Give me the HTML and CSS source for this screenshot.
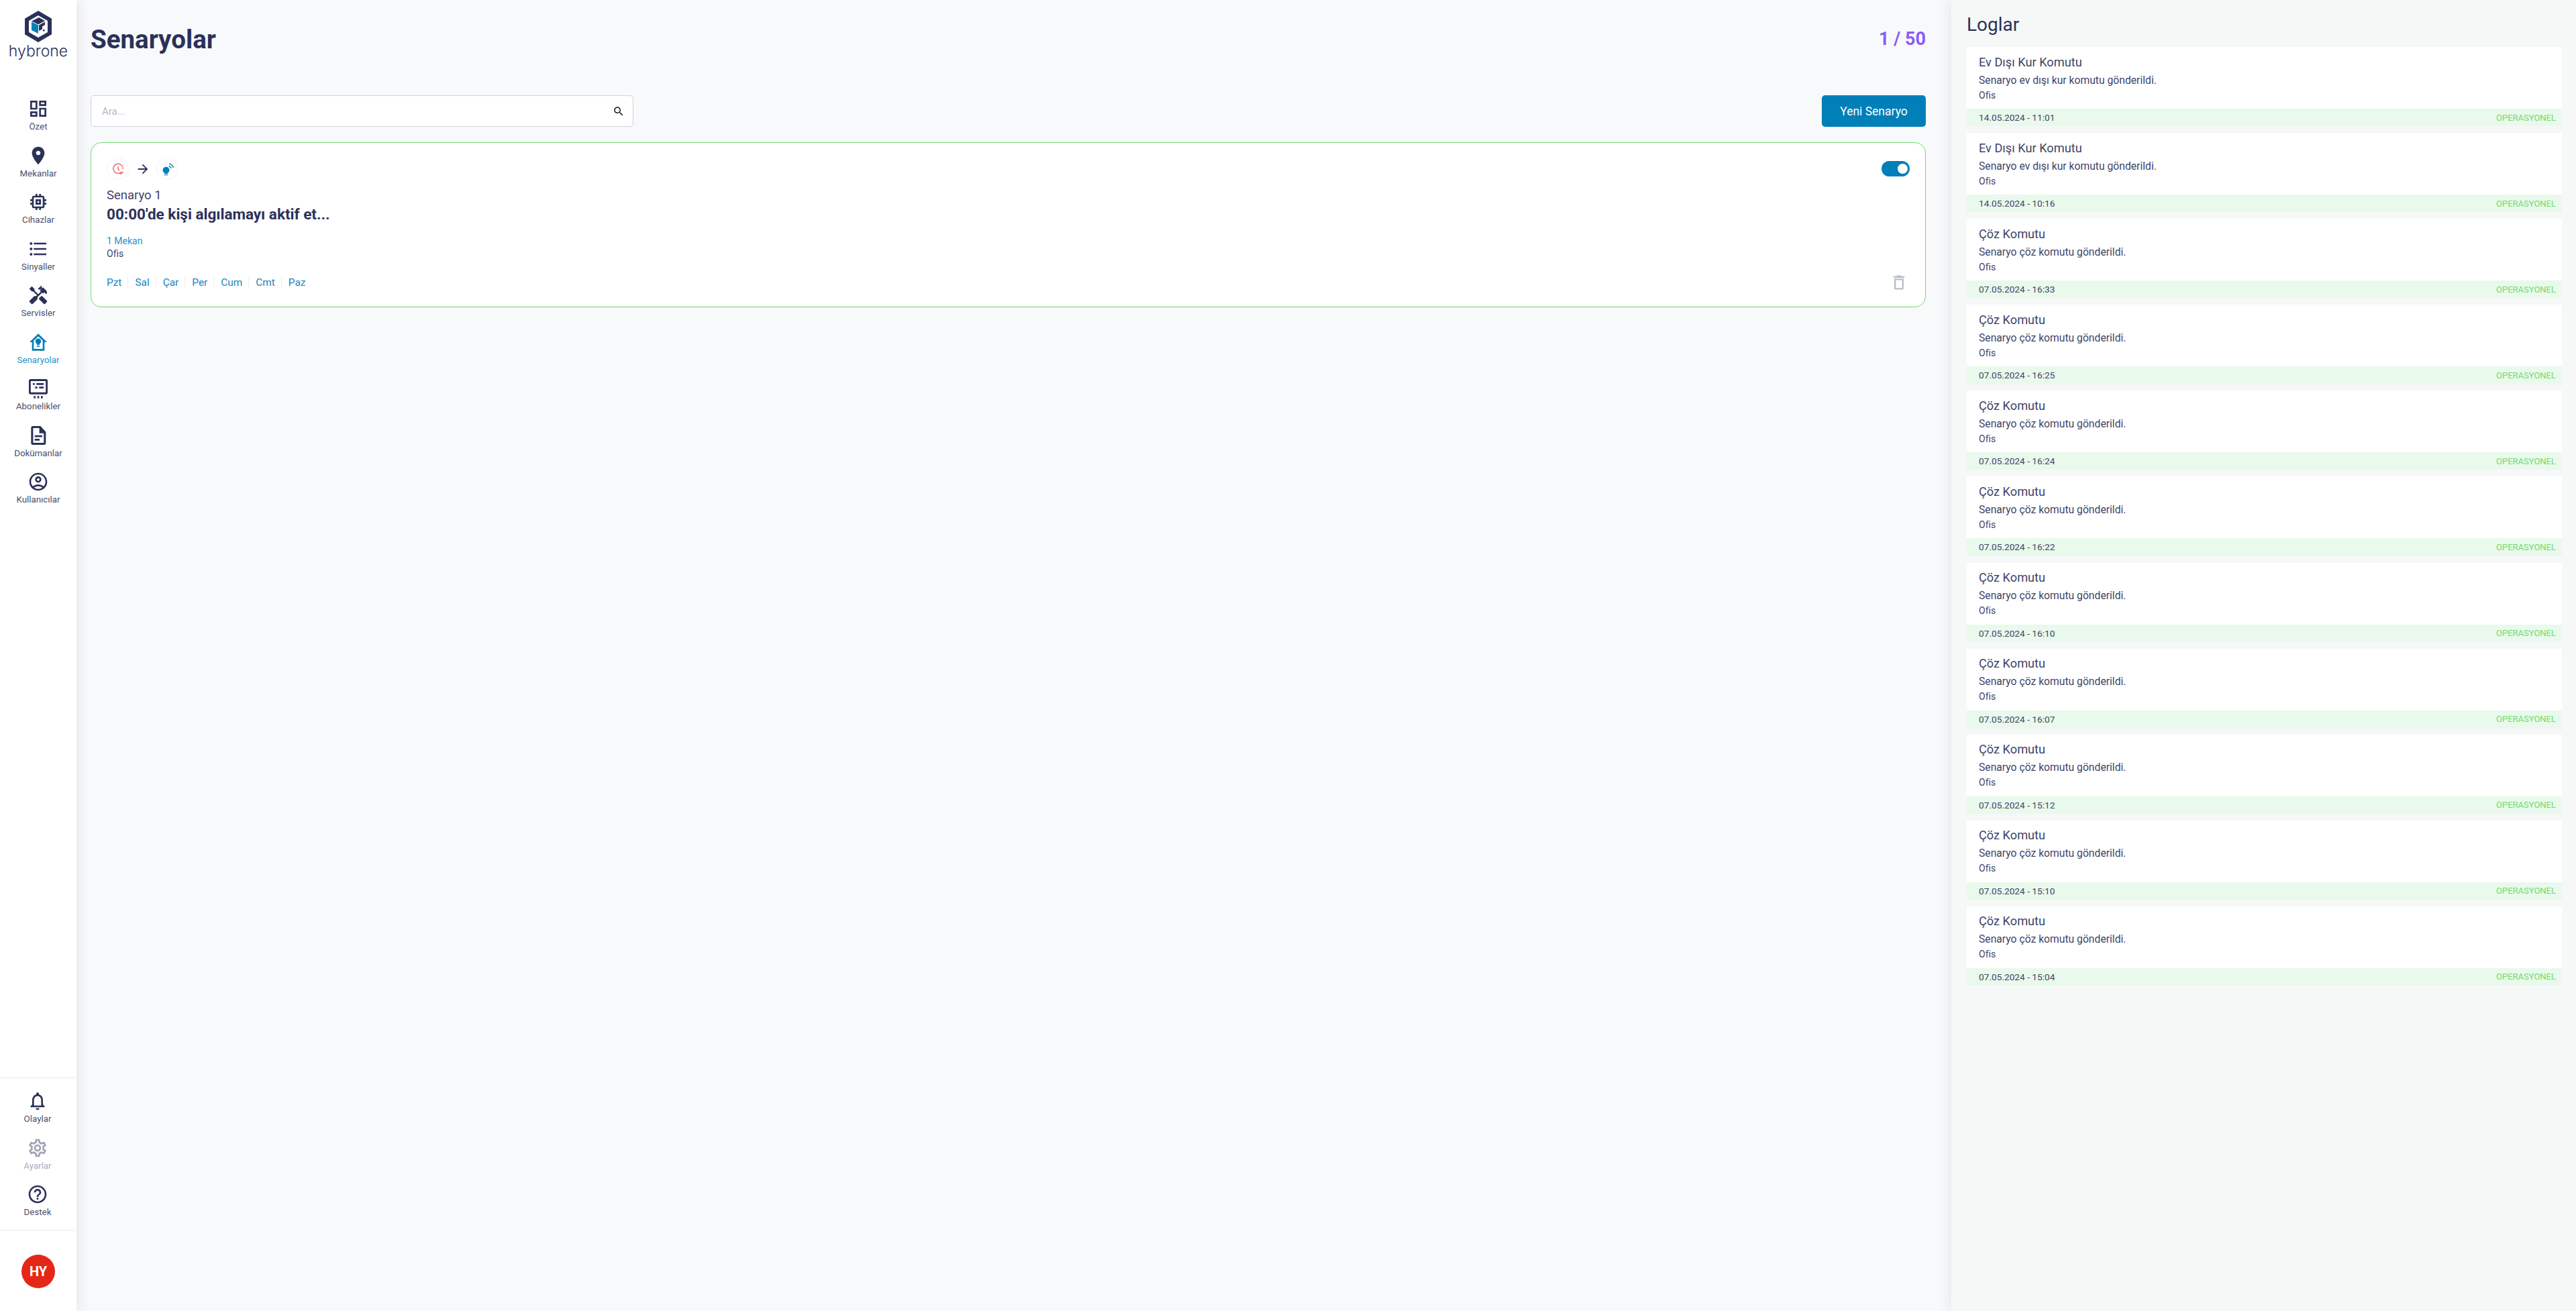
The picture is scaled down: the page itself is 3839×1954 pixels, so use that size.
FILE: index.html
```html
<!DOCTYPE html>
<html lang="tr">
<head>
    <meta charset="UTF-8">
    <title>Senaryolar</title>
    <link rel="stylesheet" href="styles.css">
</head>
<body>
<div class="layout">
    <nav class="sidebar">
        <div class="logo">
            <svg class="logo-mark" viewBox="0 0 40 47">
                <path fill="#2b3159" d="M20 0 40 11.7v23.6L20 47 0 35.300V11.700z"/>
                <path fill="#fff" d="M20 7 34 15.100v16.800L20 40 6 31.900V15.100z"/>
                <path fill="#007fb8" d="M10 16.500 20 21.500V34L10 29z"/>
                <path fill="#2b3159" d="M10 15.500 21 10 30 15 20 20.500z"/>
                <path fill="#2b3159" d="M21 21.500 30 16.500V21l-4 2.500v4L21 30z"/>
                <path fill="#2b3159" d="M27 28h2.500v2.500H27z"/>
            </svg>
            <span class="logo-text">hybrone</span>
        </div>

        <div class="nav-group">
            <a class="nav-item">
                <svg viewBox="0 0 24 24"><path d="M19 5v2h-4V5h4M9 5v6H5V5h4m10 8v6h-4v-6h4M9 17v2H5v-2h4M21 3h-8v6h8V3zM11 3H3v10h8V3zm10 8h-8v10h8V11zm-10 4H3v6h8v-6z"/></svg>
                <span>Özet</span>
            </a>
            <a class="nav-item">
                <svg viewBox="0 0 24 24"><path d="M12 2C8.130 2 5 5.130 5 9c0 5.250 7 13 7 13s7-7.750 7-13c0-3.870-3.130-7-7-7zm0 9.500c-1.380 0-2.500-1.120-2.500-2.500s1.120-2.500 2.500-2.500 2.500 1.120 2.500 2.500-1.120 2.500-2.500 2.500z"/></svg>
                <span>Mekanlar</span>
            </a>
            <a class="nav-item">
                <svg viewBox="0 0 24 24"><path d="M15 9H9v6h6V9zm-2 4h-2v-2h2v2zm8-2V9h-2V7c0-1.100-.9-2-2-2h-2V3h-2v2h-2V3H9v2H7c-1.100 0-2 .9-2 2v2H3v2h2v2H3v2h2v2c0 1.100.9 2 2 2h2v2h2v-2h2v2h2v-2h2c1.100 0 2-.9 2-2v-2h2v-2h-2v-2h2zm-4 6H7V7h10v10z"/></svg>
                <span>Cihazlar</span>
            </a>
            <a class="nav-item">
                <svg viewBox="0 0 24 24"><path d="M4 10.500c-.83 0-1.500.67-1.500 1.500s.67 1.500 1.500 1.500 1.500-.67 1.500-1.500-.67-1.500-1.500-1.500zm0-6c-.83 0-1.500.67-1.500 1.500S3.170 7.500 4 7.500 5.500 6.830 5.500 6 4.830 4.500 4 4.500zm0 12c-.83 0-1.500.68-1.500 1.500s.68 1.500 1.500 1.500 1.500-.68 1.500-1.500-.67-1.500-1.500-1.500zM7 19h14v-2H7v2zm0-6h14v-2H7v2zm0-8v2h14V5H7z"/></svg>
                <span>Sinyaller</span>
            </a>
            <a class="nav-item">
                <svg viewBox="0 0 24 24"><path d="M21.670 18.170l-5.300-5.300h-.99l-2.540 2.540v.99l5.300 5.300c.39.39 1.020.39 1.410 0l2.120-2.120c.39-.38.39-1.020 0-1.410z"/><path d="M17.340 10.190l1.410-1.410 2.120 2.120c1.170-1.170 1.170-3.070 0-4.240l-3.540-3.540-1.410 1.410V2.010l-.7-.71-3.540 3.540.71.71h2.830l-1.410 1.410 1.060 1.060-2.890 2.890-4.130-4.130V5.060L4.830 2.040 2 4.870 5.030 7.900h1.410l4.130 4.130-.85.85H7.600l-5.300 5.300c-.39.39-.39 1.020 0 1.410l2.120 2.120c.39.39 1.020.39 1.410 0l5.300-5.300v-2.120l5.150-5.150 1.060 1.050z"/></svg>
                <span>Servisler</span>
            </a>
            <a class="nav-item active">
                <svg viewBox="0 0 24 24"><path fill-rule="evenodd" d="M12 2.500 2.200 12H5v9.500h14V12h2.800zM7 19.500V10.300l5-4.800 5 4.800v9.200z"/><path d="M12 7.800a3.200 3.200 0 0 0-1.700 5.900V15h3.400v-1.300A3.200 3.200 0 0 0 12 7.800zM10.500 16h3v1.300h-3z"/></svg>
                <span>Senaryolar</span>
            </a>
            <a class="nav-item">
                <svg viewBox="0 0 24 24"><path fill-rule="evenodd" d="M3.500 1.500h17a2 2 0 0 1 2 2v13a2 2 0 0 1-2 2h-17a2 2 0 0 1-2-2v-13a2 2 0 0 1 2-2zm.5 2.200a.4.4 0 0 0-.4.400v11.800c0 .2.200.4.400.4h16a.4.4 0 0 0 .4-.4V4.100a.4.400 0 0 0-.4-.4z"/><path d="M6 6h2v2H6zM10 6h8v2h-8zM8.500 10H11v2H8.500zM13 10h5v2h-5zM7 20.500h2V23H7zM11 20.500h2V23h-2zM15 20.500h2V23h-2z"/></svg>
                <span>Abonelikler</span>
            </a>
            <a class="nav-item">
                <svg viewBox="0 0 24 24"><path fill-rule="evenodd" d="M6 1.500h8.500l6 6.500v12.500a2 2 0 0 1-2 2H6a2 2 0 0 1-2-2v-17a2 2 0 0 1 2-2zm.3 2.200v16.600h11.900V9.500h-5V3.700z"/><path d="M8 11.800h8.500v2H8zM8 15.800h5.500v2H8z"/></svg>
                <span>Dokümanlar</span>
            </a>
            <a class="nav-item">
                <svg viewBox="0 0 24 24"><path d="M12 2C6.480 2 2 6.480 2 12s4.480 10 10 10 10-4.480 10-10S17.520 2 12 2zM7.350 18.500C8.660 17.560 10.260 17 12 17s3.340.56 4.650 1.500c-1.310.94-2.910 1.500-4.650 1.500s-3.340-.56-4.650-1.500zm10.790-1.380C16.450 15.800 14.320 15 12 15s-4.450.8-6.140 2.120C4.700 15.730 4 13.950 4 12c0-4.420 3.580-8 8-8s8 3.580 8 8c0 1.950-.7 3.730-1.860 5.120z"/><path d="M12 6c-1.930 0-3.500 1.570-3.500 3.500S10.070 13 12 13s3.500-1.570 3.500-3.500S13.930 6 12 6zm0 5c-.83 0-1.500-.67-1.500-1.500S11.170 8 12 8s1.500.67 1.500 1.500S12.830 11 12 11z"/></svg>
                <span>Kullanıcılar</span>
            </a>
        </div>

        <div class="nav-group nav-bottom">
            <a class="nav-item">
                <svg viewBox="0 0 24 24"><path d="M12 22c1.100 0 2-.9 2-2h-4c0 1.100.9 2 2 2zm6-6v-5c0-3.070-1.630-5.640-4.500-6.320V4c0-.83-.67-1.500-1.500-1.500s-1.500.67-1.500 1.500v.68C7.640 5.360 6 7.920 6 11v5l-2 2v1h16v-1l-2-2zm-2 1H8v-6c0-2.480 1.510-4.500 4-4.500s4 2.020 4 4.500v6z"/></svg>
                <span>Olaylar</span>
            </a>
            <a class="nav-item disabled">
                <svg viewBox="0 0 24 24"><path d="M19.430 12.980c.04-.32.07-.64.07-.98 0-.34-.03-.66-.07-.98l2.110-1.650c.19-.15.24-.42.12-.64l-2-3.460c-.09-.16-.26-.25-.44-.25-.06 0-.12.01-.17.03l-2.490 1c-.52-.4-1.080-.73-1.690-.98l-.38-2.650C14.460 2.180 14.250 2 14 2h-4c-.25 0-.46.18-.49.42l-.38 2.650c-.61.25-1.170.59-1.690.98l-2.490-1c-.06-.02-.12-.03-.18-.03-.17 0-.34.09-.43.25l-2 3.460c-.13.22-.07.49.12.64l2.110 1.650c-.04.32-.07.65-.07.98 0 .33.03.66.07.98l-2.110 1.650c-.19.15-.24.42-.12.64l2 3.460c.09.16.26.25.44.25.06 0 .12-.01.17-.03l2.490-1c.52.4 1.080.73 1.690.98l.38 2.650c.03.24.24.42.49.42h4c.25 0 .46-.18.49-.42l.38-2.650c.61-.25 1.170-.59 1.690-.98l2.490 1c.06.02.12.03.18.03.17 0 .34-.09.43-.25l2-3.460c.12-.22.07-.49-.12-.64l-2.110-1.650zm-1.980-1.710c.04.31.05.52.05.73 0 .21-.02.43-.05.73l-.14 1.130.89.7 1.080.84-.7 1.210-1.270-.51-1.040-.42-.9.68c-.43.32-.84.56-1.250.73l-1.060.43-.16 1.130-.2 1.350h-1.400l-.19-1.350-.16-1.130-1.060-.43c-.43-.18-.83-.41-1.230-.71l-.91-.7-1.060.43-1.270.51-.7-1.210 1.080-.84.89-.7-.14-1.130c-.03-.31-.05-.54-.05-.74s.02-.43.05-.73l.14-1.130-.89-.7-1.080-.84.7-1.210 1.270.51 1.040.42.9-.68c.43-.32.84-.56 1.250-.73l1.060-.43.16-1.130.2-1.350h1.390l.19 1.350.16 1.130 1.060.43c.43.18.83.41 1.230.71l.91.7 1.060-.43 1.270-.51.7 1.210-1.070.85-.89.7.14 1.130zM12 8c-2.210 0-4 1.790-4 4s1.790 4 4 4 4-1.790 4-4-1.790-4-4-4zm0 6c-1.100 0-2-.9-2-2s.9-2 2-2 2 .9 2 2-.9 2-2 2z"/></svg>
                <span>Ayarlar</span>
            </a>
            <a class="nav-item">
                <svg viewBox="0 0 24 24"><path d="M11 18h2v-2h-2v2zm1-16C6.480 2 2 6.480 2 12s4.480 10 10 10 10-4.480 10-10S17.520 2 12 2zm0 18c-4.410 0-8-3.590-8-8s3.590-8 8-8 8 3.590 8 8-3.590 8-8 8zm0-14c-2.210 0-4 1.790-4 4h2c0-1.100.9-2 2-2s2 .9 2 2c0 2-3 1.750-3 5h2c0-2.250 3-2.500 3-5 0-2.210-1.790-4-4-4z"/></svg>
                <span>Destek</span>
            </a>
        </div>

        <div class="user-box">
            <div class="avatar">HY</div>
        </div>
    </nav>

    <main class="content">
        <div class="page-head">
            <h1>Senaryolar</h1>
            <div class="counter">1 / 50</div>
        </div>

        <div class="toolbar">
            <div class="search-box">
                <span class="search-hint">Ara...</span>
                <svg viewBox="0 0 24 24"><path d="M15.500 14h-.79l-.28-.27C15.410 12.590 16 11.110 16 9.500 16 5.910 13.090 3 9.500 3S3 5.910 3 9.500 5.910 16 9.500 16c1.610 0 3.090-.59 4.230-1.570l.27.28v.79l5 4.990L20.490 19l-4.990-5zm-6 0C7.010 14 5 11.990 5 9.500S7.010 5 9.500 5 14 7.010 14 9.500 11.990 14 9.500 14z"/></svg>
            </div>
            <button class="button">Yeni Senaryo</button>
        </div>

        <section class="scenario-card">
            <div class="card-top">
                <div class="flow">
                    <span class="flow-icon">
                        <svg viewBox="0 0 24 24" class="clock"><path d="M19 17.500A9.500 9.500 0 1 1 21.500 12"/><path d="M12 7v5.500l3 1.500"/><path d="M15.500 19l2.500 2.500 4-4"/></svg>
                    </span>
                    <svg class="flow-arrow" viewBox="0 0 24 24"><path d="M12 4l-1.410 1.410L16.170 11H4v2h12.170l-5.580 5.590L12 20l8-8z"/></svg>
                    <span class="flow-icon">
                        <svg viewBox="0 0 24 24" class="bulb"><path class="bulb-fill" d="M9 8a6 6 0 0 0-3.200 11v1.500h6.400V19A6 6 0 0 0 9 8zM6 21.500h6V23H6z"/><path d="M14 6.500a6 6 0 0 1 4 4M14.500 2.500a10 10 0 0 1 7.500 7"/></svg>
                    </span>
                </div>
                <div class="switch"><span class="switch-knob"></span></div>
            </div>
            <div class="scenario-name">Senaryo 1</div>
            <div class="scenario-title">00:00'de kişi algılamayı aktif et...</div>
            <div class="scenario-place">1 Mekan</div>
            <div class="scenario-office">Ofis</div>
            <div class="card-bottom">
                <ul class="days">
                    <li>Pzt</li>
                    <li>Sal</li>
                    <li>Çar</li>
                    <li>Per</li>
                    <li>Cum</li>
                    <li>Cmt</li>
                    <li>Paz</li>
                </ul>
                <svg class="trash" viewBox="0 0 24 24"><path d="M6 19c0 1.100.9 2 2 2h8c1.100 0 2-.9 2-2V7H6v12zM8 9h8v10H8V9zm7.500-5l-1-1h-5l-1 1H5v2h14V4h-3.500z"/></svg>
            </div>
        </section>
    </main>

    <aside class="logs">
        <h2>Loglar</h2>
        <div class="log-list">
            <article class="log-item">
                <div class="log-body"><h3>Ev Dışı Kur Komutu</h3><p>Senaryo ev dışı kur komutu gönderildi.</p><small>Ofis</small></div>
                <div class="log-foot"><time>14.05.2024 - 11:01</time><span>OPERASYONEL</span></div>
            </article>
            <article class="log-item">
                <div class="log-body"><h3>Ev Dışı Kur Komutu</h3><p>Senaryo ev dışı kur komutu gönderildi.</p><small>Ofis</small></div>
                <div class="log-foot"><time>14.05.2024 - 10:16</time><span>OPERASYONEL</span></div>
            </article>
            <article class="log-item">
                <div class="log-body"><h3>Çöz Komutu</h3><p>Senaryo çöz komutu gönderildi.</p><small>Ofis</small></div>
                <div class="log-foot"><time>07.05.2024 - 16:33</time><span>OPERASYONEL</span></div>
            </article>
            <article class="log-item">
                <div class="log-body"><h3>Çöz Komutu</h3><p>Senaryo çöz komutu gönderildi.</p><small>Ofis</small></div>
                <div class="log-foot"><time>07.05.2024 - 16:25</time><span>OPERASYONEL</span></div>
            </article>
            <article class="log-item">
                <div class="log-body"><h3>Çöz Komutu</h3><p>Senaryo çöz komutu gönderildi.</p><small>Ofis</small></div>
                <div class="log-foot"><time>07.05.2024 - 16:24</time><span>OPERASYONEL</span></div>
            </article>
            <article class="log-item">
                <div class="log-body"><h3>Çöz Komutu</h3><p>Senaryo çöz komutu gönderildi.</p><small>Ofis</small></div>
                <div class="log-foot"><time>07.05.2024 - 16:22</time><span>OPERASYONEL</span></div>
            </article>
            <article class="log-item">
                <div class="log-body"><h3>Çöz Komutu</h3><p>Senaryo çöz komutu gönderildi.</p><small>Ofis</small></div>
                <div class="log-foot"><time>07.05.2024 - 16:10</time><span>OPERASYONEL</span></div>
            </article>
            <article class="log-item">
                <div class="log-body"><h3>Çöz Komutu</h3><p>Senaryo çöz komutu gönderildi.</p><small>Ofis</small></div>
                <div class="log-foot"><time>07.05.2024 - 16:07</time><span>OPERASYONEL</span></div>
            </article>
            <article class="log-item">
                <div class="log-body"><h3>Çöz Komutu</h3><p>Senaryo çöz komutu gönderildi.</p><small>Ofis</small></div>
                <div class="log-foot"><time>07.05.2024 - 15:12</time><span>OPERASYONEL</span></div>
            </article>
            <article class="log-item">
                <div class="log-body"><h3>Çöz Komutu</h3><p>Senaryo çöz komutu gönderildi.</p><small>Ofis</small></div>
                <div class="log-foot"><time>07.05.2024 - 15:10</time><span>OPERASYONEL</span></div>
            </article>
            <article class="log-item">
                <div class="log-body"><h3>Çöz Komutu</h3><p>Senaryo çöz komutu gönderildi.</p><small>Ofis</small></div>
                <div class="log-foot"><time>07.05.2024 - 15:04</time><span>OPERASYONEL</span></div>
            </article>
        </div>
    </aside>
</div>
</body>
</html>
```

FILE: styles.css
```css
:root {
    --navy: #2b3159;
    --soft-navy: #3f4468;
    --blue: #007fb8;
    --green: #6fdc6f;
    --green-soft: #e9f9ec;
    --page: #f8f9fb;
    --panel: #f6f8f8;
}

* {
    box-sizing: border-box;
}

html, body {
    height: 100%;
}

body {
    margin: 0;
    font-family: Roboto, "Liberation Sans", sans-serif;
    color: var(--navy);
    background-color: var(--page);
    overflow: hidden;
}

.layout {
    display: flex;
    height: 100%;
}

/* sol menu */
.sidebar {
    position: relative;
    z-index: 2;
    flex: 0 0 114px;
    display: flex;
    flex-direction: column;
    background-color: #fff;
    box-shadow: 0 0 20px rgba(30, 40, 70, 0.12);
}

.logo {
    display: flex;
    flex-direction: column;
    align-items: center;
    height: 137px;
    padding-top: 16px;
}

.logo-mark {
    width: 40px;
    height: 47px;
    display: block;
}

.logo-text {
    font-family: Inter, sans-serif;
    font-weight: 300;
    font-size: 23px;
    line-height: 26px;
    color: var(--navy);
}

.nav-item {
    display: flex;
    flex-direction: column;
    align-items: center;
    height: 69.500px;
    padding-top: 9px;
    font-size: 13.300px;
    line-height: 16px;
    color: #4a4f6f;
}

.nav-item svg {
    width: 32px;
    height: 32px;
    margin-bottom: 3px;
    fill: var(--navy);
}

.nav-item.active {
    color: #1f93c9;
}

.nav-item.active svg {
    fill: var(--blue);
}

.nav-item.disabled {
    color: #a9acbd;
}

.nav-item.disabled svg {
    fill: #a0a3b6;
}

.nav-bottom {
    margin-top: auto;
    margin-right: 2px;
    height: 228px;
    padding-top: 11px;
    border-top: 1px solid #ececef;
    border-bottom: 1px solid #ececef;
}

.nav-bottom .nav-item {
    height: 69.500px;
    padding-top: 7px;
}

.user-box {
    display: flex;
    justify-content: center;
    height: 120px;
    padding-top: 36px;
}

.avatar {
    width: 50px;
    height: 50px;
    border-radius: 50%;
    background-color: #e52718;
    color: #fff;
    font-size: 20px;
    font-weight: 700;
    line-height: 50px;
    text-align: center;
}

/* orta alan */
.content {
    flex: 1;
    min-width: 0;
    padding: 0 38px 0 21px;
}

.page-head {
    display: flex;
    justify-content: space-between;
    align-items: center;
    height: 116px;
}

.page-head h1 {
    margin: 0;
    font-size: 38.500px;
    font-weight: 700;
    color: var(--navy);
}

.counter {
    font-size: 27px;
    font-weight: 700;
    color: #8a5cf6;
}

.toolbar {
    display: flex;
    justify-content: space-between;
    margin: 26px 0 23px;
}

.search-box {
    display: flex;
    justify-content: space-between;
    align-items: center;
    width: 809px;
    height: 47px;
    padding: 0 12px 0 16px;
    background-color: #fff;
    border: 1px solid #cfd2de;
    border-radius: 5px;
}

.search-hint {
    font-size: 15px;
    color: #b4b7c4;
}

.search-box svg {
    width: 18px;
    height: 18px;
    fill: #15181f;
}

.button {
    width: 155px;
    height: 47px;
    border: none;
    border-radius: 5px;
    background-color: var(--blue);
    color: #fff;
    font-family: inherit;
    font-size: 17.500px;
    font-weight: 400;
}

.scenario-card {
    height: 246px;
    padding: 22px 23px 0;
    background-color: #fff;
    border: 1px solid var(--green);
    border-radius: 16px;
}

.card-top {
    display: flex;
    justify-content: space-between;
    align-items: center;
}

.flow {
    display: flex;
    align-items: center;
    gap: 9.500px;
}

.flow-icon {
    display: flex;
    align-items: center;
    justify-content: center;
    width: 33px;
    height: 33px;
    border: 1px solid #f1f1f3;
    border-radius: 50%;
}

.flow-arrow {
    width: 22px;
    height: 22px;
    fill: var(--navy);
}

.clock {
    width: 18px;
    height: 18px;
    fill: none;
    stroke: #f56b6b;
    stroke-width: 2;
}

.bulb {
    width: 20px;
    height: 20px;
    fill: none;
    stroke: var(--blue);
    stroke-width: 1.800;
}

.bulb-fill {
    fill: var(--blue);
    stroke: none;
}

.switch {
    position: relative;
    width: 42px;
    height: 23px;
    border-radius: 12px;
    background-color: var(--blue);
}

.switch-knob {
    position: absolute;
    top: 4px;
    right: 3px;
    width: 15px;
    height: 15px;
    border-radius: 50%;
    background-color: #fff;
}

.scenario-name {
    margin-top: 11px;
    font-size: 18.500px;
    line-height: 24px;
    color: var(--soft-navy);
}

.scenario-title {
    margin-top: 1px;
    font-size: 22.500px;
    font-weight: 700;
    line-height: 30px;
}

.scenario-place {
    margin-top: 16px;
    font-size: 14px;
    line-height: 19px;
    color: #2a93c9;
}

.scenario-office {
    font-size: 14px;
    line-height: 19px;
    color: var(--soft-navy);
}

.card-bottom {
    display: flex;
    justify-content: space-between;
    align-items: center;
    margin-top: 19px;
}

.days {
    display: flex;
    margin: 0;
    padding: 0;
    list-style: none;
    font-size: 15.400px;
    line-height: 18px;
    color: #1884bd;
}

.days li {
    padding-right: 9px;
    margin-right: 10px;
    border-right: 1px solid #eceef1;
}

.days li:last-child {
    border-right: none;
}

.trash {
    width: 28px;
    height: 28px;
    margin-right: 2px;
    fill: #b8bec7;
}

/* sag panel */
.logs {
    position: relative;
    flex: 0 0 931px;
    padding: 0 21px 0 23px;
    background-color: var(--panel);
    box-shadow: 0 0 20px rgba(30, 40, 70, 0.12);
}

.logs h2 {
    margin: 0;
    height: 70px;
    padding-top: 17px;
    font-size: 28px;
    font-weight: 400;
    line-height: 39px;
}

.log-item {
    margin-bottom: 10.100px;
}

.log-body {
    height: 92px;
    padding: 8.500px 18px 0;
    background-color: #fff;
    color: var(--soft-navy);
}

.log-body h3 {
    margin: 0;
    font-size: 18.200px;
    font-weight: 400;
    line-height: 28px;
}

.log-body p {
    margin: 0;
    font-size: 15.700px;
    line-height: 25px;
}

.log-body small {
    display: block;
    font-size: 14px;
    line-height: 20px;
}

.log-foot {
    display: flex;
    justify-content: space-between;
    align-items: center;
    height: 26px;
    padding: 0 9px 0 18px;
    background-color: var(--green-soft);
    font-size: 13.700px;
    color: var(--soft-navy);
}

.log-foot span {
    font-size: 13px;
    color: var(--green);
}
```
